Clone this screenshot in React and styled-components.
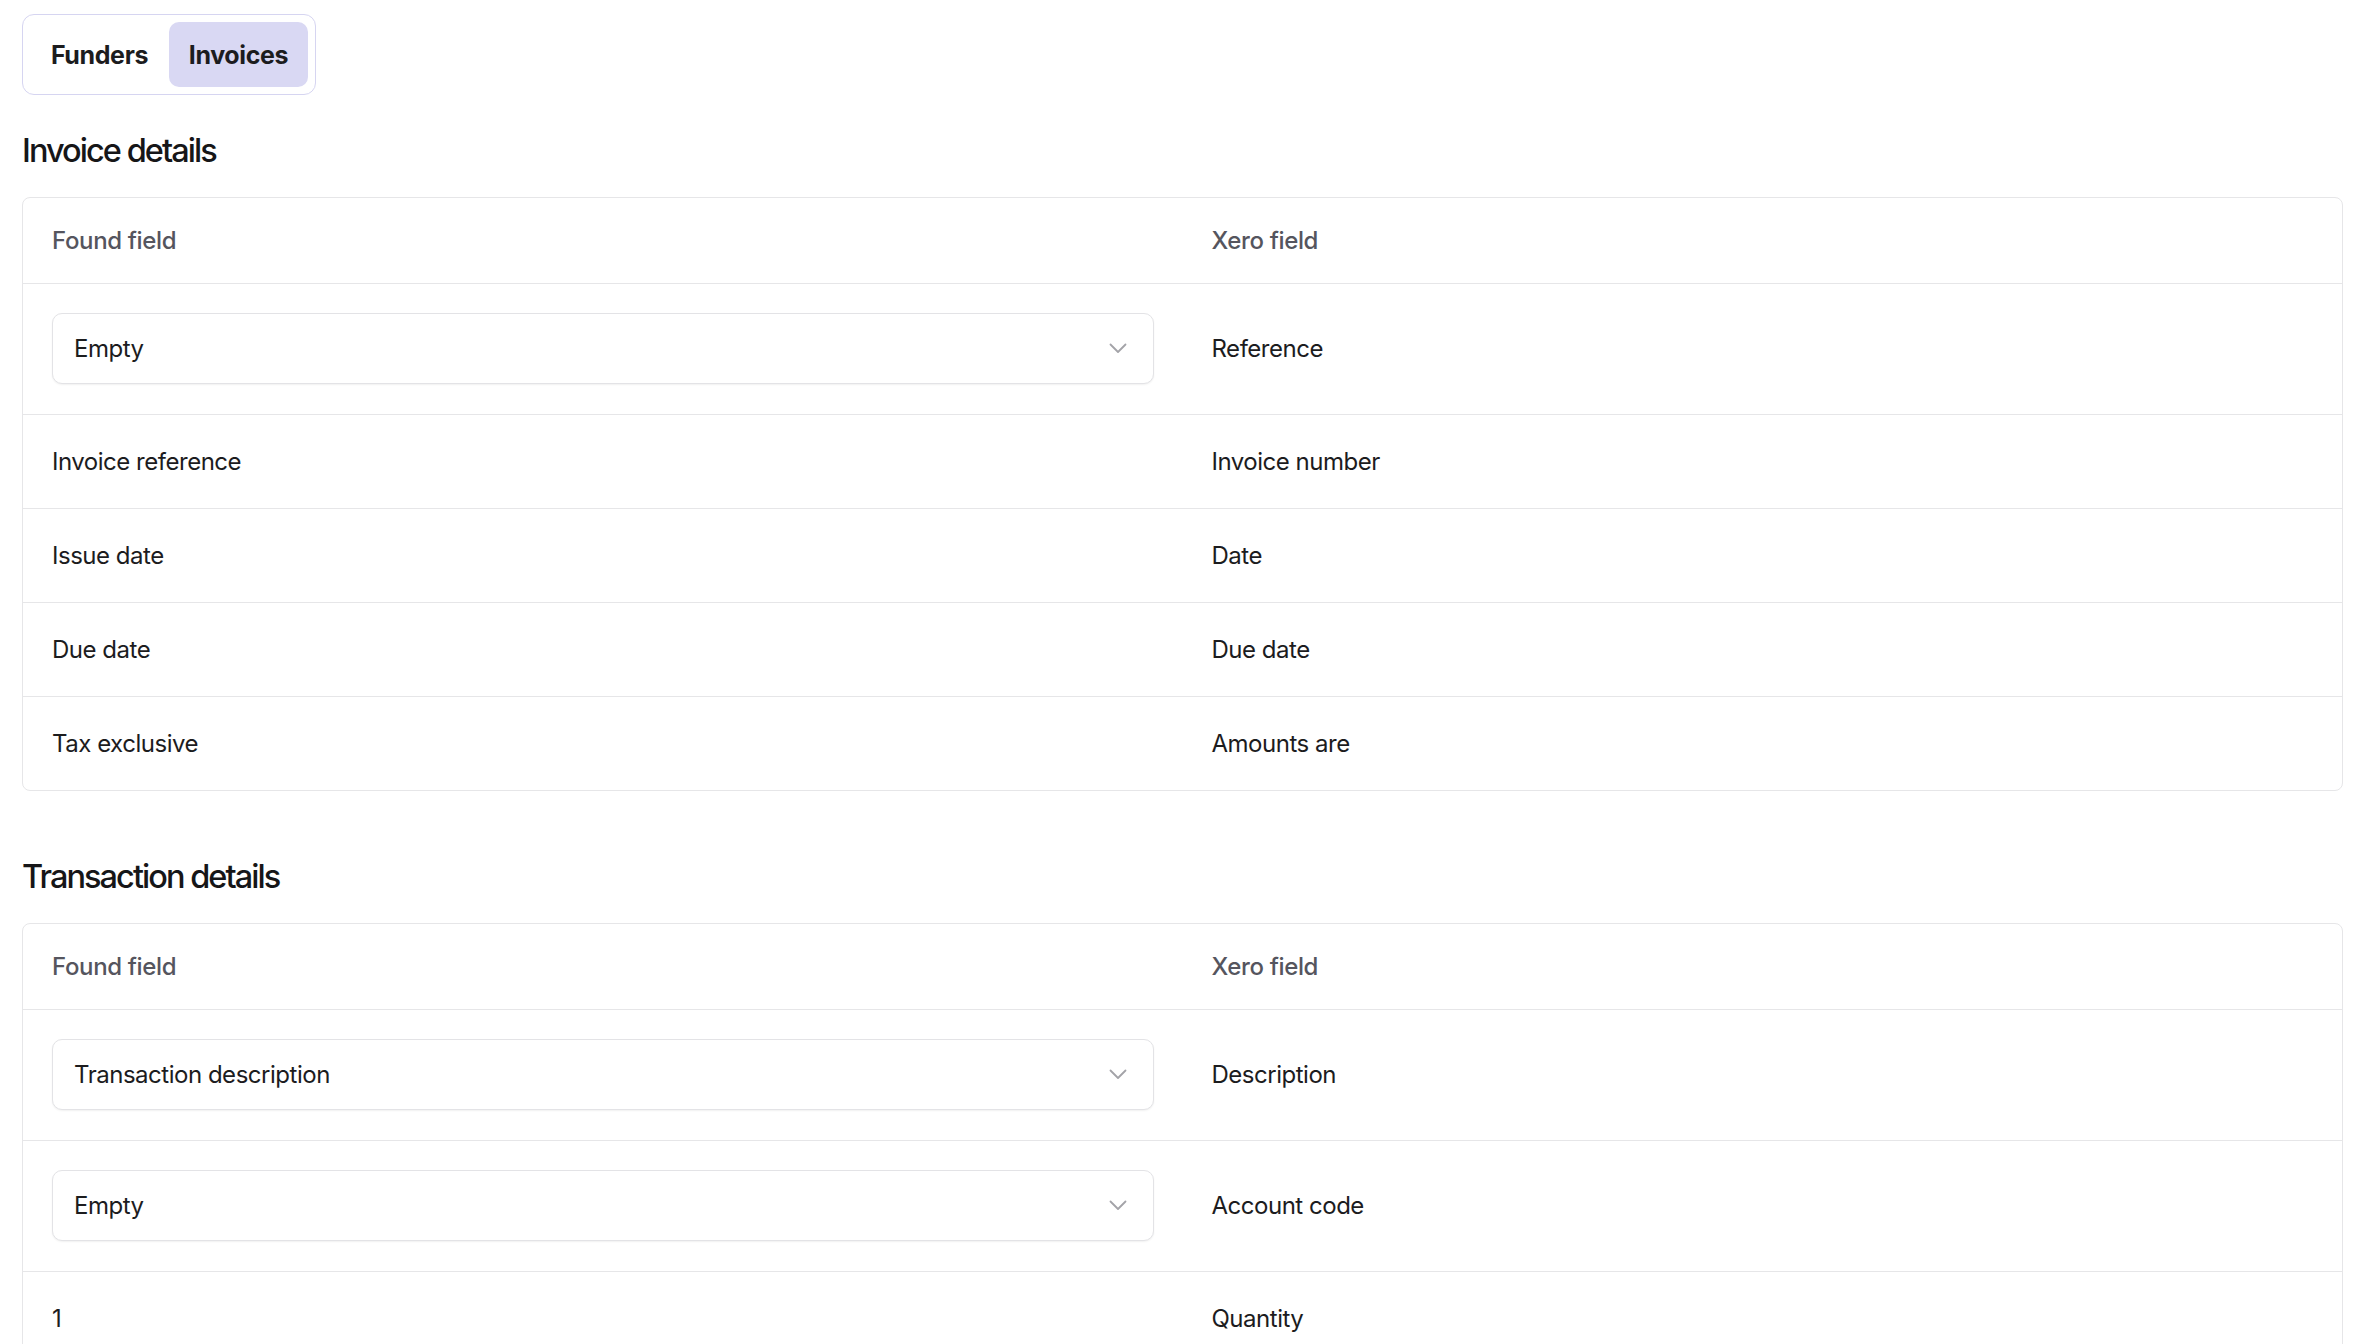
import React, { useState } from "react";
import styled, { createGlobalStyle } from "styled-components";

const GlobalStyle = createGlobalStyle`
  html, body {
    margin: 0;
    padding: 0;
    background: #ffffff;
  }
  body {
    font-family: "Inter", "Noto Sans", "Liberation Sans", sans-serif;
    color: #1c1c1e;
    -webkit-font-smoothing: antialiased;
  }
`;

const Page = styled.div`
  display: flex;
  flex-direction: column;
  align-items: flex-start;
  padding: 14px 19px 0 22px;
`;

const TabBar = styled.div`
  display: flex;
  padding: 7px;
  border: 1px solid #d6d5f1;
  border-radius: 12px;
  background: #ffffff;
`;

const Tab = styled.button`
  width: 139px;
  height: 65px;
  padding: 0;
  border: none;
  border-radius: 10px;
  background: ${(p) => (p.$active ? "#d9d8f3" : "transparent")};
  font-family: inherit;
  font-size: 25px;
  font-weight: 700;
  letter-spacing: -0.015em;
  color: #1c1c1e;
  cursor: pointer;
`;

const SectionTitle = styled.h2`
  margin: ${(p) => (p.$first ? "36px" : "66px")} 0 26px;
  font-size: 32.5px;
  line-height: 40px;
  font-weight: 500;
  letter-spacing: -0.06em;
  color: #161618;
`;

const Card = styled.div`
  align-self: stretch;
  border: 1px solid #e6e6e8;
  border-radius: 8px;
  overflow: hidden;
  background: #ffffff;
`;

const Row = styled.div`
  display: grid;
  grid-template-columns: 1fr 1fr;
  align-items: center;
  border-bottom: 1px solid #e6e6e8;
  padding: ${(p) => (p.$head ? "26px 0" : p.$select ? "29px 0 30px" : "30px 0")};

  &:last-child {
    border-bottom: none;
  }
`;

const Cell = styled.div`
  padding: 0 29px;
  font-size: 24px;
  line-height: 33px;
  font-weight: ${(p) => (p.$muted ? 500 : 400)};
  letter-spacing: ${(p) => (p.$muted ? "-0.015em" : "-0.02em")};
  color: ${(p) => (p.$muted ? "#55555e" : "#1c1c1e")};
`;

const Select = styled.div`
  display: flex;
  align-items: center;
  justify-content: space-between;
  box-sizing: border-box;
  height: 71px;
  padding: 0 26px 0 21px;
  border: 1px solid #e3e3e6;
  border-radius: 10px;
  background: #ffffff;
  box-shadow: 0 1px 2px rgba(0, 0, 0, 0.06);
  font-size: 24px;
  letter-spacing: -0.02em;
  color: #1c1c1e;
  cursor: pointer;
`;

const Chevron = () => (
  <svg width="18" height="11" viewBox="0 0 18 11" fill="none">
    <path
      d="M1.5 1.5 L9 9 L16.5 1.5"
      stroke="#a3a3a8"
      strokeWidth="1.8"
      strokeLinecap="round"
      strokeLinejoin="round"
    />
  </svg>
);

const invoiceRows = [
  { found: "Empty", xero: "Reference", select: true },
  { found: "Invoice reference", xero: "Invoice number" },
  { found: "Issue date", xero: "Date" },
  { found: "Due date", xero: "Due date" },
  { found: "Tax exclusive", xero: "Amounts are" },
];

const transactionRows = [
  { found: "Transaction description", xero: "Description", select: true },
  { found: "Empty", xero: "Account code", select: true },
  { found: "1", xero: "Quantity" },
];

function MappingTable({ rows }) {
  return (
    <Card>
      <Row $head>
        <Cell $muted>Found field</Cell>
        <Cell $muted>Xero field</Cell>
      </Row>
      {rows.map((r, i) => (
        <Row key={i} $select={r.select}>
          <Cell>
            {r.select ? (
              <Select>
                <span>{r.found}</span>
                <Chevron />
              </Select>
            ) : (
              r.found
            )}
          </Cell>
          <Cell>{r.xero}</Cell>
        </Row>
      ))}
    </Card>
  );
}

export default function App() {
  const [tab, setTab] = useState("invoices");
  return (
    <>
      <GlobalStyle />
      <Page>
        <TabBar>
          <Tab $active={tab === "funders"} onClick={() => setTab("funders")}>
            Funders
          </Tab>
          <Tab $active={tab === "invoices"} onClick={() => setTab("invoices")}>
            Invoices
          </Tab>
        </TabBar>
        <SectionTitle $first>Invoice details</SectionTitle>
        <MappingTable rows={invoiceRows} />
        <SectionTitle>Transaction details</SectionTitle>
        <MappingTable rows={transactionRows} />
      </Page>
    </>
  );
}
